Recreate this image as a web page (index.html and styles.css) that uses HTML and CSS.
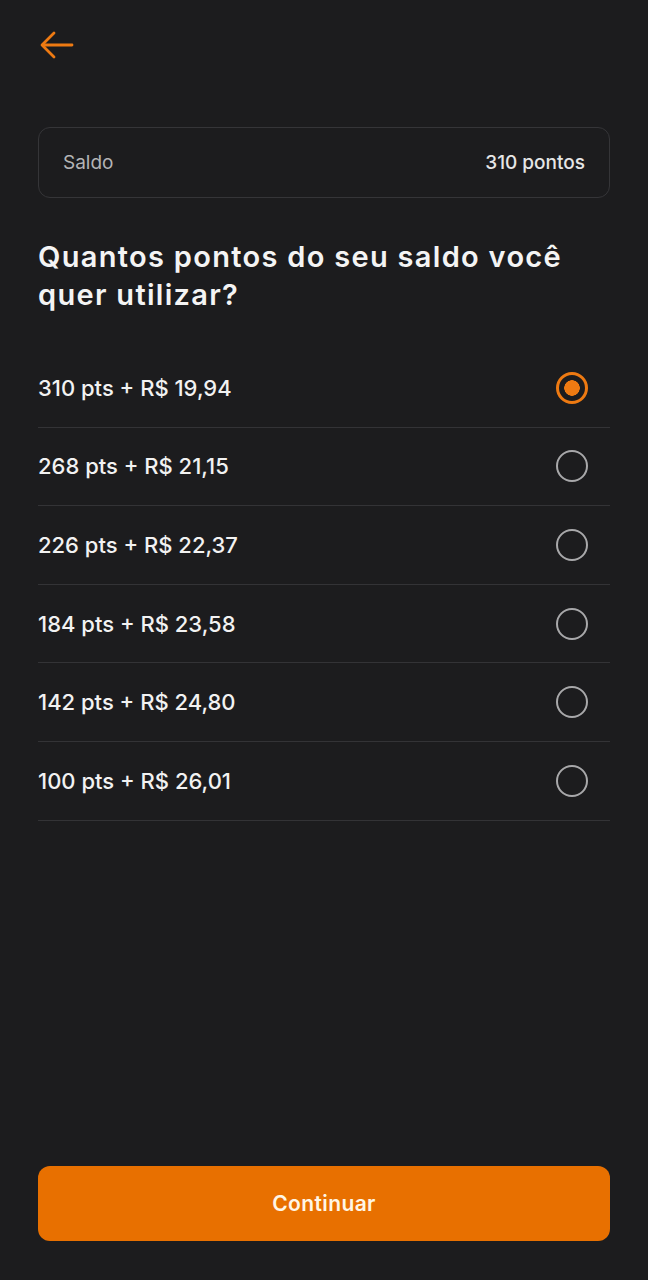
FILE: index.html
```html
<!DOCTYPE html>
<html lang="pt-BR">
<head>
<meta charset="utf-8">
<link rel="stylesheet" href="styles.css">
</head>
<body>
<div class="screen">
  <header class="topbar">
    <button class="back" aria-label="Voltar">
      <svg width="36" height="30" viewBox="0 0 36 30" fill="none" stroke="#ee7a12" stroke-width="2.8" stroke-linecap="round" stroke-linejoin="round">
        <path d="M33 15H4"/>
        <path d="M15 3L3 15L15 27"/>
      </svg>
    </button>
  </header>

  <div class="balance">
    <span class="balance-label">Saldo</span>
    <span class="balance-value">310 pontos</span>
  </div>

  <h1 class="title">Quantos pontos do seu saldo você quer utilizar?</h1>

  <ul class="options">
    <li class="option selected"><span>310 pts + R$ 19,94</span><span class="radio"></span></li>
    <li class="option"><span>268 pts + R$ 21,15</span><span class="radio"></span></li>
    <li class="option"><span>226 pts + R$ 22,37</span><span class="radio"></span></li>
    <li class="option"><span>184 pts + R$ 23,58</span><span class="radio"></span></li>
    <li class="option"><span>142 pts + R$ 24,80</span><span class="radio"></span></li>
    <li class="option"><span>100 pts + R$ 26,01</span><span class="radio"></span></li>
  </ul>

  <div class="spacer"></div>

  <button class="continue">Continuar</button>
</div>
</body>
</html>
```

FILE: styles.css
```css
* { box-sizing: border-box; }
html, body {
  margin: 0;
  padding: 0;
  background: #1c1c1e;
}
body {
  font-family: Inter, "Noto Sans", sans-serif;
  color: #f2f2f2;
}
.screen {
  height: 1280px;
  display: flex;
  flex-direction: column;
  padding: 0 38px 39px;
}
.topbar {
  height: 127px;
  padding-top: 30px;
}
.back {
  background: none;
  border: 0;
  padding: 0;
  margin-left: 1px;
  display: block;
  cursor: pointer;
}
.balance {
  height: 71px;
  border: 1.5px solid #353538;
  border-radius: 12px;
  display: flex;
  align-items: center;
  justify-content: space-between;
  padding: 0 24px;
  font-size: 19px;
}
.balance-label {
  color: #b4b4b6;
  font-weight: 400;
}
.balance-value {
  color: #e6e6e6;
  font-weight: 500;
}
.title {
  margin: 40px 0 35px;
  font-size: 29px;
  line-height: 38px;
  font-weight: 600;
  color: #f4f4f4;
  letter-spacing: 1.3px;
}
.options {
  list-style: none;
  margin: 0;
  padding: 0;
}
.option {
  height: 78.6px;
  border-bottom: 1.5px solid #333336;
  display: flex;
  align-items: center;
  justify-content: space-between;
  font-size: 22px;
  font-weight: 500;
  color: #f2f2f2;
  padding-right: 22px;
}
.radio {
  width: 32px;
  height: 32px;
  border-radius: 50%;
  border: 2.5px solid #a8a8aa;
}
.selected .radio {
  border: 3px solid #ee7a12;
  background: radial-gradient(circle, #ee7a12 0 7.5px, transparent 8px);
}
.spacer { flex: 1; }
.continue {
  height: 75px;
  width: 100%;
  border: 0;
  border-radius: 12px;
  background: #e87000;
  color: #fff6e6;
  font-family: Inter, "Noto Sans", sans-serif;
  font-size: 21px;
  font-weight: 600;
  letter-spacing: 0.4px;
}
```
